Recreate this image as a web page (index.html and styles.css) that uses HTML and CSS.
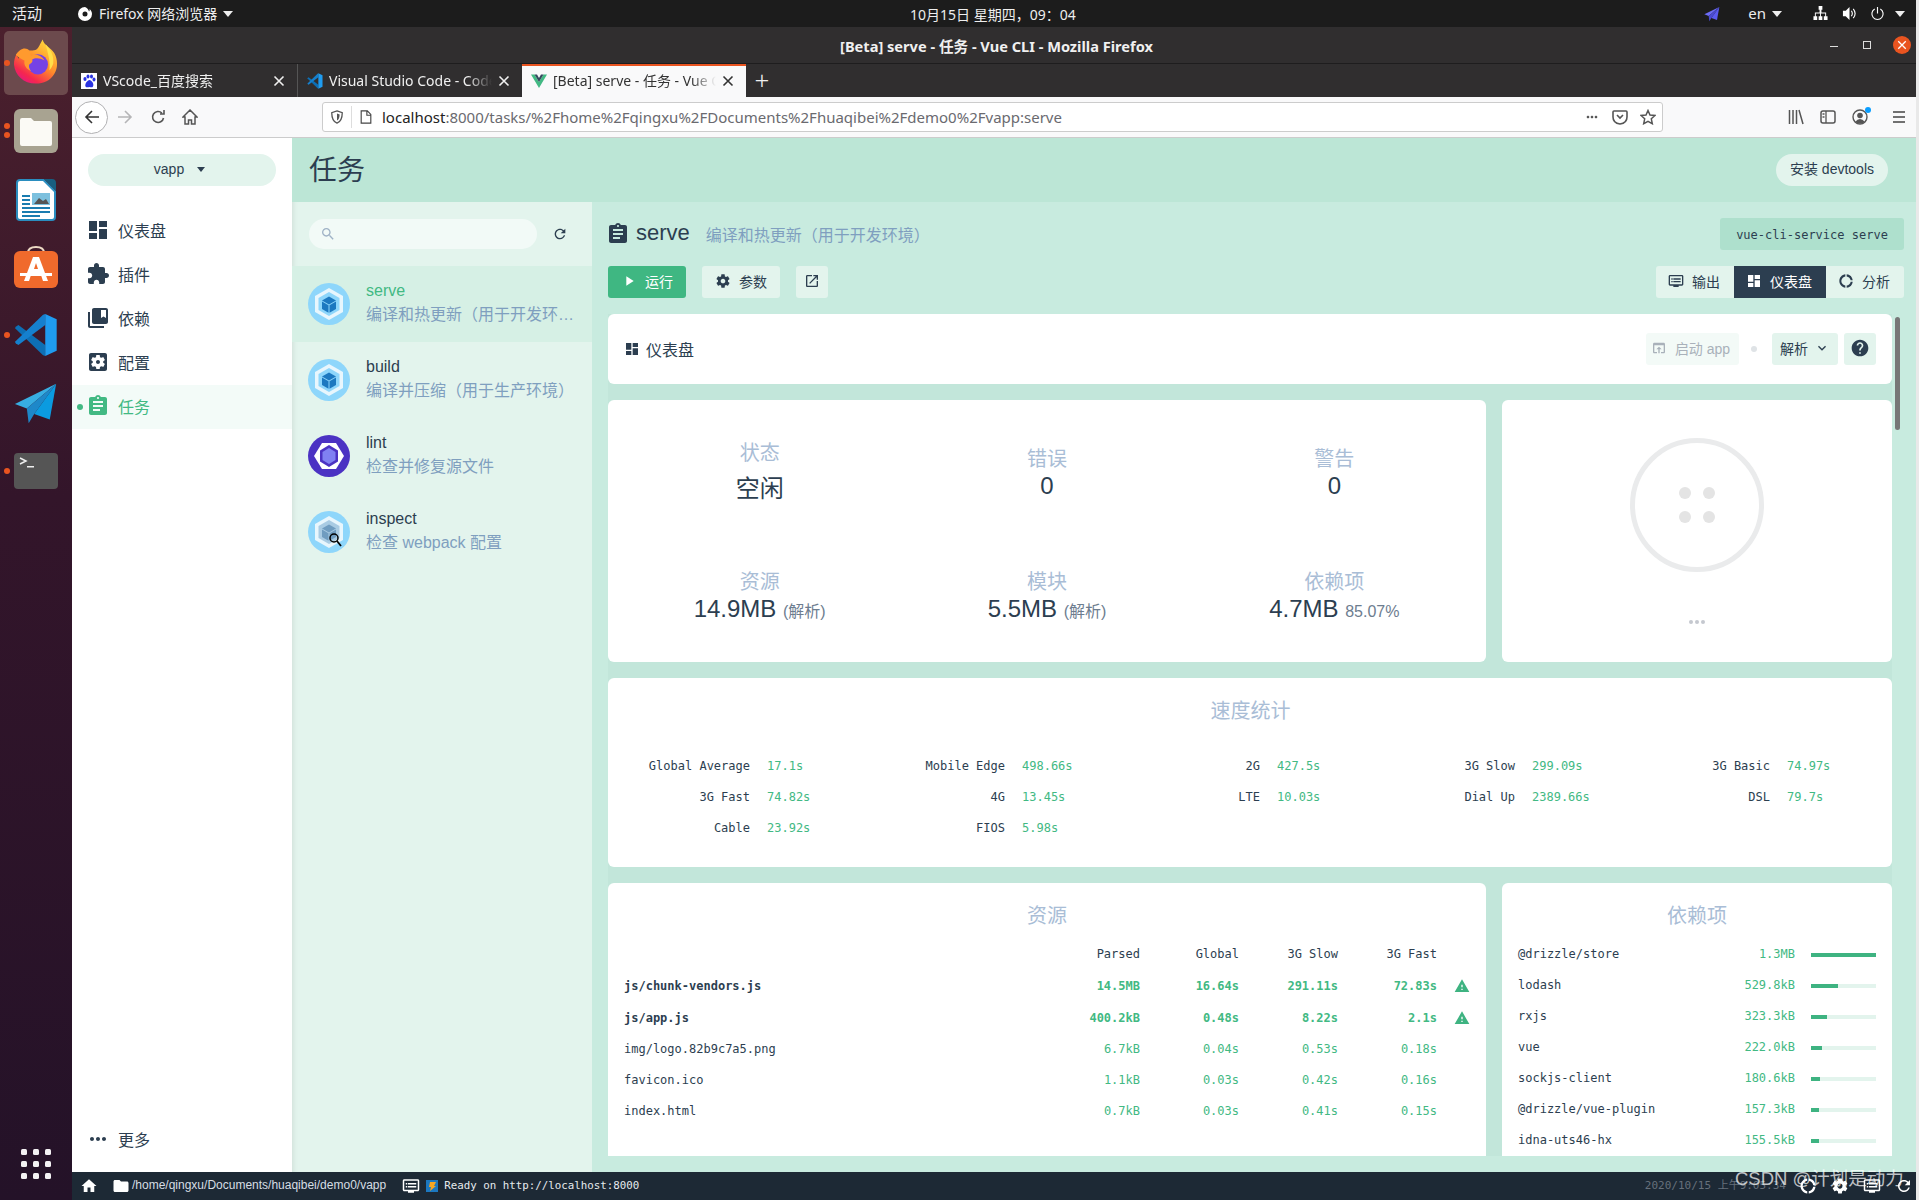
FILE: index.html
```html
<!DOCTYPE html>
<html lang="zh-CN">
<head>
<meta charset="utf-8">
<title>[Beta] serve - 任务 - Vue CLI</title>
<link rel="stylesheet" href="styles.css">
</head>
<body>
<svg class="defs" width="0" height="0" aria-hidden="true">
  <symbol id="dash" viewBox="0 0 24 24"><path d="M3 13h8V3H3v10zm0 8h8v-6H3v6zm10 0h8V11h-8v10zm0-18v6h8V3h-8z"/></symbol>
  <symbol id="ext" viewBox="0 0 24 24"><path d="M20.5 11H19V7c0-1.1-.9-2-2-2h-4V3.5C13 2.12 11.88 1 10.5 1S8 2.12 8 3.5V5H4c-1.1 0-1.99.9-1.99 2v3.8H3.5c1.49 0 2.7 1.21 2.7 2.7s-1.21 2.7-2.7 2.7H2V20c0 1.1.9 2 2 2h3.8v-1.5c0-1.49 1.21-2.7 2.7-2.7 1.49 0 2.7 1.21 2.7 2.7V22H17c1.1 0 2-.9 2-2v-4h1.5c1.38 0 2.5-1.12 2.5-2.5S21.88 11 20.5 11z"/></symbol>
  <symbol id="coll" viewBox="0 0 24 24"><path d="M4 6H2v14c0 1.1.9 2 2 2h14v-2H4V6zm16-4H8c-1.1 0-2 .9-2 2v12c0 1.1.9 2 2 2h12c1.1 0 2-.9 2-2V4c0-1.1-.9-2-2-2zm0 10l-2.5-1.5L15 12V4h5v8z"/></symbol>
  <symbol id="setapp" viewBox="0 0 24 24"><path d="M12 10c-1.1 0-2 .9-2 2s.9 2 2 2 2-.9 2-2-.9-2-2-2zm7-7H5c-1.11 0-2 .9-2 2v14c0 1.1.89 2 2 2h14c1.11 0 2-.9 2-2V5c0-1.1-.89-2-2-2zm-1.75 9c0 .23-.02.46-.05.68l1.48 1.16c.13.11.17.3.08.45l-1.4 2.42c-.09.15-.27.21-.43.15l-1.74-.7c-.36.28-.76.51-1.18.69l-.26 1.85c-.03.17-.18.3-.35.3h-2.8c-.17 0-.32-.13-.35-.29l-.26-1.85c-.43-.18-.82-.41-1.18-.69l-1.74.7c-.16.06-.34 0-.43-.15l-1.4-2.42c-.09-.15-.05-.34.08-.45l1.48-1.16c-.03-.23-.05-.46-.05-.69 0-.23.02-.46.05-.68l-1.48-1.16c-.13-.11-.17-.3-.08-.45l1.4-2.42c.09-.15.27-.21.43-.15l1.74.7c.36-.28.76-.51 1.18-.69l.26-1.85c.03-.17.18-.3.35-.3h2.8c.17 0 .32.13.35.29l.26 1.85c.43.18.82.41 1.18.69l1.74-.7c.16-.06.34 0 .43.15l1.4 2.42c.09.15.05.34-.08.45l-1.48 1.16c.03.23.05.46.05.69z"/></symbol>
  <symbol id="task" viewBox="0 0 24 24"><path d="M19 3h-4.18C14.4 1.84 13.3 1 12 1c-1.3 0-2.4.84-2.82 2H5c-1.1 0-2 .9-2 2v14c0 1.1.9 2 2 2h14c1.1 0 2-.9 2-2V5c0-1.1-.9-2-2-2zm-7 0c.55 0 1 .45 1 1s-.45 1-1 1-1-.45-1-1 .45-1 1-1zm2 14H7v-2h7v2zm3-4H7v-2h10v2zm0-4H7V7h10v2z"/></symbol>
  <symbol id="more" viewBox="0 0 24 24"><path d="M6 10c-1.1 0-2 .9-2 2s.9 2 2 2 2-.9 2-2-.9-2-2-2zm12 0c-1.1 0-2 .9-2 2s.9 2 2 2 2-.9 2-2-.9-2-2-2zm-6 0c-1.1 0-2 .9-2 2s.9 2 2 2 2-.9 2-2-.9-2-2-2z"/></symbol>
  <symbol id="search" viewBox="0 0 24 24"><path d="M15.5 14h-.79l-.28-.27C15.41 12.59 16 11.11 16 9.5 16 5.91 13.09 3 9.5 3S3 5.91 3 9.5 5.91 16 9.5 16c1.61 0 3.09-.59 4.23-1.57l.27.28v.79l5 4.99L20.49 19l-4.99-5zm-6 0C7.01 14 5 11.99 5 9.5S7.01 5 9.5 5 14 7.01 14 9.5 11.99 14 9.5 14z"/></symbol>
  <symbol id="refresh" viewBox="0 0 24 24"><path d="M17.65 6.35C16.2 4.9 14.21 4 12 4c-4.42 0-7.99 3.58-7.99 8s3.57 8 7.99 8c3.73 0 6.84-2.55 7.73-6h-2.08c-.82 2.33-3.04 4-5.65 4-3.31 0-6-2.69-6-6s2.69-6 6-6c1.66 0 3.14.69 4.22 1.78L13 11h7V4l-2.35 2.35z"/></symbol>
  <symbol id="play" viewBox="0 0 24 24"><path d="M8 5v14l11-7z"/></symbol>
  <symbol id="gear" viewBox="0 0 24 24"><path d="M19.43 12.98c.04-.32.07-.64.07-.98s-.03-.66-.07-.98l2.11-1.65c.19-.15.24-.42.12-.64l-2-3.46c-.12-.22-.39-.3-.61-.22l-2.49 1c-.52-.4-1.08-.73-1.69-.98l-.38-2.65C14.46 2.18 14.25 2 14 2h-4c-.25 0-.46.18-.49.42l-.38 2.65c-.61.25-1.17.59-1.69.98l-2.49-1c-.23-.09-.49 0-.61.22l-2 3.46c-.13.22-.07.49.12.64l2.11 1.65c-.04.32-.07.65-.07.98s.03.66.07.98l-2.11 1.65c-.19.15-.24.42-.12.64l2 3.46c.12.22.39.3.61.22l2.49-1c.52.4 1.08.73 1.69.98l.38 2.65c.03.24.24.42.49.42h4c.25 0 .46-.18.49-.42l.38-2.65c.61-.25 1.17-.59 1.69-.98l2.49 1c.23.09.49 0 .61-.22l2-3.46c.12-.22.07-.49-.12-.64l-2.11-1.65zM12 15.5c-1.93 0-3.5-1.57-3.5-3.5s1.57-3.5 3.5-3.5 3.5 1.57 3.5 3.5-1.57 3.5-3.5 3.5z"/></symbol>
  <symbol id="open" viewBox="0 0 24 24"><path d="M19 19H5V5h7V3H5c-1.11 0-2 .9-2 2v14c0 1.1.89 2 2 2h14c1.1 0 2-.9 2-2v-7h-2v7zM14 3v2h3.59l-9.83 9.83 1.41 1.41L19 6.41V10h2V3h-7z"/></symbol>
  <symbol id="donut" viewBox="0 0 24 24"><path d="M11 5.08V2c-5 .5-9 4.81-9 10s4 9.5 9 10v-3.08c-3-.48-6-3.4-6-6.92s3-6.44 6-6.92zM18.97 11H22c-.47-5-4-8.53-9-9v3.08C16 5.51 18.54 8 18.97 11zM13 18.92V22c5-.47 8.53-4 9-9h-3.03c-.43 3-2.97 5.49-5.97 5.92z"/></symbol>
  <symbol id="dvr" viewBox="0 0 24 24"><path d="M21 3H3c-1.1 0-2 .9-2 2v12c0 1.1.9 2 2 2h5v2h8v-2h5c1.1 0 1.99-.9 1.99-2L23 5c0-1.1-.9-2-2-2zm0 14H3V5h18v12zm-2-9H8v2h11V8zm0 4H8v2h11v-2zM7 8H5v2h2V8zm0 4H5v2h2v-2z"/></symbol>
  <symbol id="browser" viewBox="0 0 24 24"><path d="M19 4H5c-1.11 0-2 .9-2 2v12c0 1.1.89 2 2 2h4v-2H5V8h14v10h-4v2h4c1.1 0 2-.9 2-2V6c0-1.1-.89-2-2-2zm-7 6l-4 4h3v6h2v-6h3l-4-4z"/></symbol>
  <symbol id="expand" viewBox="0 0 24 24"><path d="M16.59 8.59L12 13.17 7.41 8.59 6 10l6 6 6-6z"/></symbol>
  <symbol id="help" viewBox="0 0 24 24"><path d="M12 2C6.48 2 2 6.48 2 12s4.48 10 10 10 10-4.48 10-10S17.52 2 12 2zm1 17h-2v-2h2v2zm2.07-7.75l-.9.92C13.45 12.9 13 13.5 13 15h-2v-.5c0-1.1.45-2.1 1.17-2.83l1.24-1.26c.37-.36.59-.86.59-1.41 0-1.1-.9-2-2-2s-2 .9-2 2H8c0-2.21 1.79-4 4-4s4 1.79 4 4c0 .88-.36 1.68-.93 2.25z"/></symbol>
  <symbol id="warn" viewBox="0 0 24 24"><path d="M1 21h22L12 2 1 21zm12-3h-2v-2h2v2zm0-4h-2v-4h2v4z"/></symbol>
  <symbol id="home" viewBox="0 0 24 24"><path d="M10 20v-6h4v6h5v-8h3L12 3 2 12h3v8z"/></symbol>
  <symbol id="folder" viewBox="0 0 24 24"><path d="M10 4H4c-1.1 0-1.99.9-1.99 2L2 18c0 1.1.9 2 2 2h16c1.1 0 2-.9 2-2V8c0-1.1-.9-2-2-2h-8l-2-2z"/></symbol>
  <symbol id="caret" viewBox="0 0 10 6"><path d="M0 0h10L5 6z"/></symbol>
  <symbol id="close" viewBox="0 0 12 12"><path d="M1.5 1.5l9 9m0-9l-9 9" fill="none" stroke="currentColor" stroke-width="1.6"/></symbol>
  <symbol id="plane" viewBox="0 0 48 48"><path d="M46 3L1 25l13 5z" fill="#37aee2"/><path d="M46 3L14 30l2 16 6-10z" fill="#1e88c9"/><path d="M46 3L22 36l17 6z" fill="#0b9be0"/></symbol>
  <symbol id="vscode" viewBox="0 0 100 100"><path d="M3 35q-1-2 1-4l6-4 61 46v25l-5-2z" fill="#0d6fb5"/><path d="M3 65q-1 2 1 4l6 4 61-46V2l-5 2z" fill="#1580ce"/><path d="M71 2l26 12v72L71 98z" fill="#1f9cf0"/></symbol>
  <symbol id="webpack" viewBox="0 0 42 42"><circle cx="21" cy="21" r="21" fill="#8ed6fb"/><path d="M21 5l14 8v16l-14 8-14-8V13z" fill="#e8f6fd"/><path d="M21 9l10.500 6v12L21 33l-10.500-6V15z" fill="#8ed6fb"/><path d="M21 13.500l7 4-7 4-7-4z" fill="#1c78c0"/><path d="M14 18.500l6.500 3.700v7.600L14 26z" fill="#1c78c0"/><path d="M28 18.500l-6.500 3.700v7.600L28 26z" fill="#1c78c0"/></symbol>
</svg>

<div class="desk">
  <header class="topbar">
    <span class="tb-act">活动</span>
    <span class="tb-app">
      <svg class="tb-ff" viewBox="0 0 16 16"><path d="M8 1a7 7 0 1 0 7 7c0-2-1-4-2.500-5 .3 1 .2 2-.5 2.500C11.500 3.500 10 1.500 8 1zm0 4.500A2.500 2.500 0 1 1 8 10.500 2.500 2.500 0 0 1 8 5.500z" fill="#fff"/></svg>
      Firefox 网络浏览器
      <svg class="caret"><use href="#caret"/></svg>
    </span>
    <span class="tb-clock">10月15日 星期四，09：04</span>
    <span class="tb-tray">
      <svg class="tray-plane" viewBox="0 0 48 48"><path d="M46 3L1 25l13 5z" fill="#6b6bf5"/><path d="M46 3L14 30l2 16 6-10z" fill="#4a4ad0"/><path d="M46 3L22 36l17 6z" fill="#5a5aee"/></svg>
      <span class="tray-en">en <svg class="caret"><use href="#caret"/></svg></span>
      <svg class="tray-ic" viewBox="0 0 16 16"><path d="M6 0h4v4H9v3h5v4h1.500v4h-4v-4H13V8H8.500v3H10v4H6v-4h1.500V8H3v3h1.500v4h-4v-4H2V7h5V4H6z" fill="#fff"/></svg>
      <svg class="tray-ic tray-vol" viewBox="0 0 16 16"><path d="M1 5h3l4-4v14l-4-4H1z" fill="#fff"/><path d="M10 5q2 3 0 6M12 3q4 5 0 10" stroke="#fff" fill="none" stroke-width="1.200"/></svg>
      <svg class="tray-ic tray-pow" viewBox="0 0 16 16"><path d="M5 3.200a6 6 0 1 0 6 0M8 1v7" stroke="#fff" fill="none" stroke-width="1.200"/></svg>
      <svg class="caret"><use href="#caret"/></svg>
    </span>
  </header>

  <div class="below">
    <nav class="dock">
      <div class="slot slot-on"><i class="pip"></i>
        <svg class="dk dk-ff" viewBox="0 0 48 48">
          <defs>
            <linearGradient id="ffa" x1="0.800" y1="0.100" x2="0.200" y2="1"><stop offset="0" stop-color="#ffd43a"/><stop offset="0.450" stop-color="#ff8a2b"/><stop offset="0.800" stop-color="#f5274e"/><stop offset="1" stop-color="#e31587"/></linearGradient>
          </defs>
          <path d="M31 1c1 6 8 8 12 14 4 7 4 16 0 22-4 7-11 10-19 10C11 47 2 38 1 27c0-4 1-8 3-11 0 2 1 4 2 5 1-4 4-7 8-8 4-1 9 1 12-3 2-3 3-6 5-9z" fill="url(#ffa)"/>
          <path d="M34 6c5 5 9 12 8 20-1 3-2 5-4 7 1-8-1-16-4-27z" fill="#ffdf4a"/>
          <circle cx="26" cy="27" r="10.500" fill="#7542e5"/>
          <path d="M3 17c3-5 8-8 12-6 2 1 2 3 5 3-2 1-2 2-1 4 4-2 10-1 14 5-5-3-10-3-13-1 1 3-1 4-3 5-1 2 0 5 2 7-5-2-8-6-7-11-3-1-6-3-9-6z" fill="#ff9a2e"/>
        </svg>
      </div>
      <div class="slot"><i class="pip pip-a"></i><i class="pip pip-b"></i>
        <svg class="dk" viewBox="0 0 44 44"><rect width="44" height="44" rx="6" fill="#a8a391"/><path d="M6 11q0-2 2-2h9l3 3h16q2 0 2 2v21q0 2-2 2H8q-2 0-2-2z" fill="#fbfaf5"/></svg>
      </div>
      <div class="slot">
        <svg class="dk" viewBox="0 0 44 44"><path d="M2 6q0-4 4-4h24l12 12v26q0 4-4 4H6q-4 0-4-4z" fill="#2a8dbf"/><path d="M4 6q0-2 2-2h23l11 11v25q0 2-2 2H6q-2 0-2-2z" fill="#fff"/><path d="M30 2h8q4 0 4 4v8z" fill="#185e80"/><path d="M8 18h8v2H8zm0 4h8v2H8zm0 4h8v2H8zm-0 4h28v2H8zm0 4h28v2H8zm0 4h18v2H8z" fill="#1a7cb0"/><rect x="18" y="16" width="18" height="12" fill="#7cc0de"/><path d="M20 27l5-6 4 3 3-2 3 5z" fill="#555"/></svg>
      </div>
      <div class="slot">
        <svg class="dk" viewBox="0 0 44 44"><path d="M14 8q0-6 8-6t8 6" fill="none" stroke="#ecd9c4" stroke-width="2"/><rect y="6" width="44" height="37" rx="6" fill="#f06a2c"/><path d="M19 12h6l9 24h-5l-2-6H17l-2 6h-5z" fill="#fff"/><path d="M6 28h32v3H6z" fill="#fff"/><path d="M20 24h4l-2-6z" fill="#f06a2c"/></svg>
      </div>
      <div class="slot"><i class="pip"></i>
        <svg class="dk"><use href="#vscode"/></svg>
      </div>
      <div class="slot">
        <svg class="dk dk-pl"><use href="#plane"/></svg>
      </div>
      <div class="slot"><i class="pip"></i>
        <svg class="dk" viewBox="0 0 44 44"><rect y="4" width="44" height="36" rx="4" fill="#555"/><path d="M6 9l6 3-6 3" fill="none" stroke="#eee" stroke-width="1.500"/><path d="M13 17h7v1.500h-7z" fill="#eee"/></svg>
      </div>
      <div class="apps">
        <i></i><i></i><i></i><i></i><i></i><i></i><i></i><i></i><i></i>
      </div>
    </nav>

    <div class="win">
      <div class="titlebar">
        <span class="title">[Beta] serve - 任务 - Vue CLI - Mozilla Firefox</span>
        <span class="winbtns">
          <i class="wb-min"></i><i class="wb-max"></i>
          <span class="wb-close"><svg class="wb-x"><use href="#close"/></svg></span>
        </span>
      </div>

      <div class="tabs">
        <div class="tab">
          <svg class="fav" viewBox="0 0 16 16"><rect width="16" height="16" fill="#fff"/><g fill="#2932e1"><ellipse cx="4" cy="6" rx="1.600" ry="2"/><ellipse cx="7" cy="3.500" rx="1.500" ry="2"/><ellipse cx="10.500" cy="3.500" rx="1.500" ry="2"/><ellipse cx="13" cy="6.500" rx="1.500" ry="2"/><path d="M8.500 7c2 0 5 4 3.500 6.500-1 1.500-2.500.5-3.500.5s-3 1-4-.5C3.500 11 6.500 7 8.500 7z"/></g></svg>
          <span class="tab-t">VScode_百度搜索</span>
          <svg class="tab-x"><use href="#close"/></svg>
        </div>
        <div class="tab tab-sep">
          <svg class="fav"><use href="#vscode"/></svg>
          <span class="tab-t">Visual Studio Code - Code Editing</span>
          <svg class="tab-x"><use href="#close"/></svg>
        </div>
        <div class="tab tab-on">
          <svg class="fav" viewBox="0 0 16 16"><path d="M0 1.500h3.500L8 9l4.500-7.500H16L8 15z" fill="#42b983"/><path d="M3.500 1.500H6L8 5l2-3.500h2.500L8 9z" fill="#35495e"/></svg>
          <span class="tab-t">[Beta] serve - 任务 - Vue CLI</span>
          <svg class="tab-x"><use href="#close"/></svg>
        </div>
        <span class="tab-new">+</span>
      </div>

      <div class="toolbar">
        <span class="back"><svg class="tool-in" viewBox="0 0 16 16"><path d="M15 8H2M8 2L2 8l6 6" fill="none" stroke="#333" stroke-width="1.600"/></svg></span>
        <svg class="tool fwd" viewBox="0 0 16 16"><path d="M1 8h13M8 2l6 6-6 6" fill="none" stroke="#b5b5b7" stroke-width="1.600"/></svg>
        <svg class="tool" viewBox="0 0 16 16"><path d="M13.500 9a5.500 5.500 0 1 1-1.600-5M14 1v4h-4" fill="none" stroke="#555" stroke-width="1.600"/></svg>
        <svg class="tool" viewBox="0 0 16 16"><path d="M8 1L1 8h2v7h3.500v-4h3v4H13V8h2z" fill="none" stroke="#555" stroke-width="1.500"/></svg>
        <div class="url">
          <svg class="url-sh" viewBox="0 0 16 16"><path d="M8 1l6 2c0 6-1 10-6 12C3 13 2 9 2 3z" fill="none" stroke="#555" stroke-width="1.500"/><path d="M8 4l3 1c0 3-1 6-3 7z" fill="#555"/></svg>
          <i class="url-sep"></i>
          <svg class="url-pg" viewBox="0 0 16 16"><path d="M2.500 1h7l4 4v10h-11zM9 1v5h4.500" fill="none" stroke="#444" stroke-width="1.300"/></svg>
          <span class="url-t"><b>localhost</b>:8000/tasks/%2Fhome%2Fqingxu%2FDocuments%2Fhuaqibei%2Fdemo0%2Fvapp:serve</span>
          <svg class="url-ic url-more"><use href="#more"/></svg>
          <svg class="url-ic" viewBox="0 0 16 16"><path d="M2 2h12q1 0 1 1v5q0 6-7 7-7-1-7-7V3q0-1 1-1zM5 6l3 3 3-3" fill="none" stroke="#555" stroke-width="1.600"/></svg>
          <svg class="url-ic url-last" viewBox="0 0 16 16"><path d="M8 1.500l2 4.500 5 .5-3.700 3.300 1 4.900L8 12.300 3.700 14.700l1-4.900L1 6.500 6 6z" fill="none" stroke="#555" stroke-width="1.500"/></svg>
        </div>
        <svg class="tool tool-lib" viewBox="0 0 16 16"><path d="M1.500 1v14M5 1v14M8.500 1v14M11 1l4 14" fill="none" stroke="#555" stroke-width="1.500"/></svg>
        <svg class="tool" viewBox="0 0 16 16"><rect x="1" y="2" width="14" height="12" rx="2" fill="none" stroke="#555" stroke-width="1.500"/><path d="M6 2v12M2.500 5h2M2.500 8h2" stroke="#555" stroke-width="1.300"/></svg>
        <span class="acct"><svg class="tool-in" viewBox="0 0 16 16"><circle cx="8" cy="8" r="7" fill="none" stroke="#555" stroke-width="1.400"/><circle cx="8" cy="6.500" r="2.800" fill="#555"/><path d="M3 13q5-6 10 0-5 3-10 0z" fill="#555"/></svg><i class="acct-dot"></i></span>
        <i class="tool-sep"></i>
        <svg class="tool" viewBox="0 0 16 16"><path d="M2 3h12M2 8h12M2 13h12" stroke="#444" stroke-width="1.700"/></svg>
      </div>

      <div class="app">
        <aside class="nav">
          <div class="proj">vapp <svg class="proj-c"><use href="#caret"/></svg></div>
          <ul class="menu">
            <li class="mi"><svg class="ic24"><use href="#dash"/></svg>仪表盘</li>
            <li class="mi"><svg class="ic24"><use href="#ext"/></svg>插件</li>
            <li class="mi"><svg class="ic24"><use href="#coll"/></svg>依赖</li>
            <li class="mi"><svg class="ic24"><use href="#setapp"/></svg>配置</li>
            <li class="mi mi-on"><i class="mi-dot"></i><svg class="ic24"><use href="#task"/></svg>任务</li>
          </ul>
          <div class="mi nav-more"><svg class="ic24"><use href="#more"/></svg>更多</div>
        </aside>

        <div class="work">
          <div class="head">
            <h1>任务</h1>
            <span class="devtools">安装 devtools</span>
          </div>
          <div class="body">
            <section class="tasks">
              <div class="t-search">
                <div class="t-input"><svg class="ic16 c-soft"><use href="#search"/></svg></div>
                <svg class="ic16"><use href="#refresh"/></svg>
              </div>
              <div class="t-item t-on">
                <svg class="t-ic"><use href="#webpack"/></svg>
                <div class="t-txt"><div class="t-n">serve</div><div class="t-d">编译和热更新（用于开发环境）</div></div>
              </div>
              <div class="t-item">
                <svg class="t-ic"><use href="#webpack"/></svg>
                <div class="t-txt"><div class="t-n">build</div><div class="t-d">编译并压缩（用于生产环境）</div></div>
              </div>
              <div class="t-item">
                <svg class="t-ic" viewBox="0 0 42 42"><circle cx="21" cy="21" r="21" fill="#4b32c3"/><path d="M14 8h14l8 13-8 13H14L6 21z" fill="#fff"/><path d="M21 10l9 5.500v11L21 32l-9-5.500v-11z" fill="#4b32c3"/><path d="M21 13l6.500 4v8L21 29l-6.500-4v-8z" fill="#8080f2"/></svg>
                <div class="t-txt"><div class="t-n">lint</div><div class="t-d">检查并修复源文件</div></div>
              </div>
              <div class="t-item">
                <svg class="t-ic" viewBox="0 0 42 42"><circle cx="21" cy="21" r="21" fill="#8ed6fb"/><path d="M21 5l14 8v16l-14 8-14-8V13z" fill="#e8f6fd"/><path d="M21 9l10.500 6v12L21 33l-10.500-6V15z" fill="#a9cbe3"/><path d="M21 13.500l7 4-7 4-7-4z" fill="#6f9cc0"/><path d="M14 18.500l6.500 3.700v7.600L14 26z" fill="#6f9cc0"/><path d="M28 18.500l-6.500 3.700v7.600L28 26z" fill="#6f9cc0"/><circle cx="26" cy="27" r="4" fill="none" stroke="#000" stroke-width="1.500"/><path d="M29 30l4 5" stroke="#000" stroke-width="1.800"/></svg>
                <div class="t-txt"><div class="t-n">inspect</div><div class="t-d">检查 webpack 配置</div></div>
              </div>
            </section>

            <section class="detail">
              <div class="d-top">
                <div class="d-title">
                  <svg class="ic24"><use href="#task"/></svg>
                  <span class="d-name">serve</span>
                  <span class="d-desc">编译和热更新（用于开发环境）</span>
                  <code class="d-cmd">vue-cli-service serve</code>
                </div>
                <div class="d-acts">
                  <span class="btn btn-run"><svg class="ic16"><use href="#play"/></svg>运行</span>
                  <span class="btn btn-soft"><svg class="ic16"><use href="#gear"/></svg>参数</span>
                  <span class="btn btn-soft btn-sq"><svg class="ic16"><use href="#open"/></svg></span>
                  <div class="seg">
                    <span class="seg-i"><svg class="ic16"><use href="#dvr"/></svg>输出</span>
                    <span class="seg-i seg-on"><svg class="ic16"><use href="#dash"/></svg>仪表盘</span>
                    <span class="seg-i"><svg class="ic16"><use href="#donut"/></svg>分析</span>
                  </div>
                </div>
              </div>

              <div class="panel">
                <div class="card dash-bar">
                  <svg class="ic16"><use href="#dash"/></svg>
                  <span class="dash-t">仪表盘</span>
                  <span class="btn btn-off"><svg class="ic16"><use href="#browser"/></svg>启动 app</span>
                  <i class="dash-dot"></i>
                  <span class="btn btn-soft btn-sel">解析<svg class="ic16"><use href="#expand"/></svg></span>
                  <span class="btn btn-soft btn-sq"><svg class="ic20"><use href="#help"/></svg></span>
                </div>

                <div class="row-a">
                  <div class="card stats">
                    <div class="stat"><div class="s-l">状态</div><div class="s-v s-cjk">空闲</div></div>
                    <div class="stat"><div class="s-l">错误</div><div class="s-v">0</div></div>
                    <div class="stat"><div class="s-l">警告</div><div class="s-v">0</div></div>
                    <div class="stat"><div class="s-l">资源</div><div class="s-v">14.9MB <small>(解析)</small></div></div>
                    <div class="stat"><div class="s-l">模块</div><div class="s-v">5.5MB <small>(解析)</small></div></div>
                    <div class="stat"><div class="s-l">依赖项</div><div class="s-v">4.7MB <small>85.07%</small></div></div>
                  </div>
                  <div class="card logo">
                    <svg class="logo-c" viewBox="0 0 134 134"><circle cx="67" cy="67" r="64.500" fill="none" stroke="#eaebec" stroke-width="5"/><g fill="#e4e4e4"><circle cx="55" cy="55" r="6"/><circle cx="79" cy="55" r="6"/><circle cx="55" cy="79" r="6"/><circle cx="79" cy="79" r="6"/></g></svg>
                    <svg class="logo-m" viewBox="0 0 16 4"><g fill="#c5c8cf"><circle cx="2" cy="2" r="2"/><circle cx="8" cy="2" r="2"/><circle cx="14" cy="2" r="2"/></g></svg>
                  </div>
                </div>

                <div class="card speed">
                  <h2 class="c-title">速度统计</h2>
                  <div class="sp-grid">
                    <div class="sp"><span class="sp-l">Global Average</span><span class="val">17.1s</span></div>
                    <div class="sp"><span class="sp-l">Mobile Edge</span><span class="val">498.66s</span></div>
                    <div class="sp"><span class="sp-l">2G</span><span class="val">427.5s</span></div>
                    <div class="sp"><span class="sp-l">3G Slow</span><span class="val">299.09s</span></div>
                    <div class="sp"><span class="sp-l">3G Basic</span><span class="val">74.97s</span></div>
                    <div class="sp"><span class="sp-l">3G Fast</span><span class="val">74.82s</span></div>
                    <div class="sp"><span class="sp-l">4G</span><span class="val">13.45s</span></div>
                    <div class="sp"><span class="sp-l">LTE</span><span class="val">10.03s</span></div>
                    <div class="sp"><span class="sp-l">Dial Up</span><span class="val">2389.66s</span></div>
                    <div class="sp"><span class="sp-l">DSL</span><span class="val">79.7s</span></div>
                    <div class="sp"><span class="sp-l">Cable</span><span class="val">23.92s</span></div>
                    <div class="sp"><span class="sp-l">FIOS</span><span class="val">5.98s</span></div>
                  </div>
                </div>

                <div class="row-a">
                  <div class="card assets">
                    <h2 class="c-title">资源</h2>
                    <div class="as as-h"><span></span><span>Parsed</span><span>Global</span><span>3G Slow</span><span>3G Fast</span><span></span></div>
                    <div class="as as-big"><span>js/chunk-vendors.js</span><span class="val">14.5MB</span><span class="val">16.64s</span><span class="val">291.11s</span><span class="val">72.83s</span><svg class="ic16 c-green"><use href="#warn"/></svg></div>
                    <div class="as as-big"><span>js/app.js</span><span class="val">400.2kB</span><span class="val">0.48s</span><span class="val">8.22s</span><span class="val">2.1s</span><svg class="ic16 c-green"><use href="#warn"/></svg></div>
                    <div class="as"><span>img/logo.82b9c7a5.png</span><span class="val">6.7kB</span><span class="val">0.04s</span><span class="val">0.53s</span><span class="val">0.18s</span><span></span></div>
                    <div class="as"><span>favicon.ico</span><span class="val">1.1kB</span><span class="val">0.03s</span><span class="val">0.42s</span><span class="val">0.16s</span><span></span></div>
                    <div class="as"><span>index.html</span><span class="val">0.7kB</span><span class="val">0.03s</span><span class="val">0.41s</span><span class="val">0.15s</span><span></span></div>
                  </div>
                  <div class="card deps">
                    <h2 class="c-title">依赖项</h2>
                    <div class="dep"><span class="dep-n">@drizzle/store</span><span class="val">1.3MB</span><span class="bar"><i style="width:100%"></i></span></div>
                    <div class="dep"><span class="dep-n">lodash</span><span class="val">529.8kB</span><span class="bar"><i style="width:42%"></i></span></div>
                    <div class="dep"><span class="dep-n">rxjs</span><span class="val">323.3kB</span><span class="bar"><i style="width:25%"></i></span></div>
                    <div class="dep"><span class="dep-n">vue</span><span class="val">222.0kB</span><span class="bar"><i style="width:17%"></i></span></div>
                    <div class="dep"><span class="dep-n">sockjs-client</span><span class="val">180.6kB</span><span class="bar"><i style="width:14%"></i></span></div>
                    <div class="dep"><span class="dep-n">@drizzle/vue-plugin</span><span class="val">157.3kB</span><span class="bar"><i style="width:12%"></i></span></div>
                    <div class="dep"><span class="dep-n">idna-uts46-hx</span><span class="val">155.5kB</span><span class="bar"><i style="width:12%"></i></span></div>
                  </div>
                </div>
              </div>
              <i class="scroll"></i>
            </section>
          </div>
        </div>
      </div>

      <footer class="status">
        <svg class="ic18"><use href="#home"/></svg>
        <svg class="ic18 st-folder"><use href="#folder"/></svg>
        <span class="st-path">/home/qingxu/Documents/huaqibei/demo0/vapp</span>
        <svg class="ic18 st-out"><use href="#dvr"/></svg>
        <svg class="st-wp" viewBox="0 0 12 12"><rect width="12" height="12" fill="#1c78c0"/><path d="M4 2h6L8 6h2l-6 5 1-4H3z" fill="#f5a623"/></svg>
        <span class="st-log">Ready on http://localhost:8000</span>
        <span class="st-time">2020/10/15 上午9:05:34</span>
        <span class="st-icons">
          <svg class="ic18"><use href="#donut"/></svg>
          <svg class="ic18"><use href="#gear"/></svg>
          <svg class="ic18"><use href="#dvr"/></svg>
          <svg class="ic18"><use href="#refresh"/></svg>
        </span>
      </footer>
    </div>
  </div>
  <span class="wm">CSDN @计划是动力</span>
</div>
</body>
</html>
```
FILE: styles.css
```css
* { box-sizing: border-box; }
html, body { margin: 0; padding: 0; height: 100%; overflow: hidden; }
body { font-family: "Liberation Sans", "Noto Sans CJK SC", sans-serif; color: #2c3e50; background: #e9e9e9; }
svg { fill: currentColor; flex: none; display: block; }
i { display: block; font-style: normal; }
h1, h2, ul { margin: 0; padding: 0; font-weight: 400; list-style: none; }
.defs { position: absolute; }

.desk { position: relative; width: 1916px; height: 1200px; display: flex; flex-direction: column; }

/* GNOME top bar */
.topbar { height: 27px; background: #1c1c1c; color: #eee; display: flex; align-items: center; font: 14px/29px "Noto Sans", "Noto Sans CJK SC", sans-serif; position: relative; flex: none; }
.tb-act { margin-left: 12px; font-size: 15px; }
.tb-app { margin-left: 35px; display: flex; align-items: center; gap: 6px; }
.tb-ff { width: 16px; height: 16px; }
.caret { width: 10px; height: 6px; color: #eee; }
.tb-clock { position: absolute; left: 910px; top: 0; }
.tb-tray { margin-left: auto; padding-right: 11px; display: flex; align-items: center; }
.tray-plane { width: 16px; height: 16px; margin-right: 28px; }
.tray-en { display: flex; align-items: center; gap: 6px; margin-right: 31px; font-size: 15px; }
.tray-ic { width: 15px; height: 15px; margin-right: 14px; }
.tray-vol { margin-right: 13px; }
.tray-pow { margin-right: 10px; }

.below { flex: 1; display: flex; min-height: 0; }

/* Dock */
.dock { width: 72px; flex: none; background: linear-gradient(180deg, #4b202d 0%, #33152a 40%, #241228 100%); display: flex; flex-direction: column; padding-top: 2px; }
.slot { height: 68px; position: relative; display: flex; align-items: center; justify-content: center; flex: none; }
.slot-on::before { content: ""; position: absolute; left: 4px; top: 2px; width: 64px; height: 64px; border-radius: 5px; background: #6c4a4d; }
.dk { width: 44px; height: 44px; position: relative; }
.dk-ff { width: 46px; height: 47px; margin-bottom: 3px; }
.dk-pl { width: 46px; height: 44px; }
.pip { position: absolute; left: 4px; top: 31px; width: 6px; height: 6px; border-radius: 50%; background: #e95420; }
.pip-a { top: 26px; }
.pip-b { top: 35px; }
.apps { margin-top: auto; margin-bottom: 21px; margin-left: 21px; display: grid; grid-template-columns: repeat(3, 6px); gap: 6px; }
.apps i { width: 6px; height: 6px; border-radius: 1.500px; background: #f4f2f4; }

/* Window */
.win { flex: 1; min-width: 0; display: flex; flex-direction: column; }
.titlebar { height: 37px; flex: none; background: #302e2f; color: #f0f0f0; display: flex; align-items: center; justify-content: center; position: relative; border-bottom: 1px solid #1e1d1e; }
.title { font: 700 14.600px/36px "Noto Sans", "Noto Sans CJK SC", sans-serif; margin: 2px 0 0 5px; }
.winbtns { position: absolute; right: 5px; top: 0; height: 36px; display: flex; align-items: center; }
.wb-min { width: 8px; height: 1.500px; background: #ddd; margin-top: 3px; }
.wb-max { width: 8px; height: 8px; border: 1.500px solid #ddd; margin-left: 25px; }
.wb-close { width: 18px; height: 18px; border-radius: 50%; background: #e95420; margin-left: 22px; display: flex; align-items: center; justify-content: center; color: #fff; }
.wb-x { width: 10px; height: 10px; }

.tabs { height: 33px; flex: none; background: #302e2f; display: flex; align-items: stretch; color: #f0f0f0; font: 14px/33px "Noto Sans", "Noto Sans CJK SC", sans-serif; }
.tab { width: 225px; display: flex; align-items: center; padding: 0 12px 0 9px; gap: 6px; }
.tab-sep { border-left: 1px solid #555; }
.tab-on { background: #f9f9fa; color: #333; border-top: 2px solid #e95420; width: 224px; padding-bottom: 2px; }
.fav { width: 16px; height: 16px; }
.tab-t { flex: 1; min-width: 0; white-space: nowrap; overflow: hidden; -webkit-mask-image: linear-gradient(90deg, #000 85%, transparent 100%); mask-image: linear-gradient(90deg, #000 85%, transparent 100%); }
.tab-x { width: 12px; height: 12px; }
.tab-new { width: 32px; text-align: center; font-size: 26px; font-weight: 300; }

.toolbar { height: 41px; flex: none; background: #f9f9fa; border-bottom: 1px solid #ccc; display: flex; align-items: center; padding-left: 3px; color: #555; }
.back { width: 33px; height: 33px; border-radius: 50%; border: 1px solid #b1b1b3; background: #fff; display: flex; align-items: center; justify-content: center; margin-right: 9px; flex: none; }
.tool { width: 16px; height: 16px; margin-right: 16px; }
.tool-in { width: 16px; height: 16px; }
.fwd { margin-right: 17px; }
.url { width: 1341px; flex: none; height: 30px; margin-left: 108px; background: #fff; border: 1px solid #ccc; border-radius: 3px; display: flex; align-items: center; padding-left: 7px; font: 15px/28px "Noto Sans", sans-serif; color: #6a6a6f; }
.url-sh { width: 14px; height: 14px; }
.url-sep { width: 1px; height: 22px; background: #ddd; margin: 0 7px; }
.url-pg { width: 14px; height: 16px; margin-right: 9px; }
.url-t b { font-weight: 400; color: #222; }
.url-t { flex: 1; white-space: nowrap; }
.url-ic { width: 16px; height: 16px; margin-right: 12px; color: #555; }
.url-last { margin-right: 6px; }
.tool-lib { margin-left: 125px; }
.acct { position: relative; display: block; flex: none; }
.acct-dot { position: absolute; right: -3px; top: -2px; width: 6px; height: 6px; border-radius: 50%; background: #0a9eff; }
.tool-sep { width: 1px; height: 32px; background: #ddd; margin-right: 12px; margin-left: 11px; }

/* Application */
.app { flex: 1; min-height: 0; display: flex; }
.nav { width: 220px; flex: none; background: #fff; display: flex; flex-direction: column; padding-top: 16px; }
.proj { width: 188px; height: 32px; margin-left: 16px; padding: 0 5px 2px 0; border-radius: 16px; background: #e3f4ed; font-size: 14px; display: flex; align-items: center; justify-content: center; gap: 13px; }
.proj-c { width: 8px; height: 5px; }
.menu { margin-top: 23px; }
.mi { height: 44px; display: flex; align-items: center; padding: 0 0 2px 14px; gap: 8px; font-size: 16px; position: relative; }
.mi-on { background: #f3fbf8; color: #42b983; }
.mi-dot { position: absolute; left: 5px; top: 19px; width: 6px; height: 6px; border-radius: 50%; background: #42b983; }
.nav-more { margin-top: auto; margin-bottom: 10px; }
.ic24 { width: 24px; height: 24px; }
.ic20 { width: 20px; height: 20px; }
.ic18 { width: 18px; height: 18px; }
.ic16 { width: 16px; height: 16px; }
.c-soft { color: #9fb2c6; }
.c-green { color: #3eb381; }

.work { flex: 1; min-width: 0; display: flex; flex-direction: column; }
.head { height: 64px; flex: none; background: #bce6d6; display: flex; align-items: center; justify-content: space-between; padding: 0 28px 0 17px; }
.head h1 { font-size: 28px; line-height: 40px; padding-top: 2px; }
.devtools { height: 32px; width: 112px; border-radius: 16px; background: #e3f4ed; font-size: 14px; line-height: 30px; text-align: center; }

.body { flex: 1; min-height: 0; display: flex; }
.tasks { width: 300px; flex: none; background: #e3f4ed; box-shadow: inset 6px 0 6px -6px rgba(0,0,0,.12); }
.t-search { height: 64px; display: flex; align-items: center; padding: 0 16px 0 17px; gap: 15px; }
.t-input { width: 228px; height: 30px; border-radius: 15px; background: #f2faf7; display: flex; align-items: center; padding-left: 11px; }
.t-item { height: 76px; display: flex; align-items: center; padding: 0 12px 0 16px; gap: 16px; }
.t-on { background: #d6f0e5; }
.t-on .t-n { color: #42b983; }
.t-ic { width: 42px; height: 42px; }
.t-txt { min-width: 0; flex: 1; padding-bottom: 2px; }
.t-n { font-size: 16px; line-height: 24px; margin-top: -1px; }
.t-d { font-size: 16px; line-height: 24px; color: #7f9fbf; white-space: nowrap; overflow: hidden; text-overflow: ellipsis; }

.detail { flex: 1; min-width: 0; background: #c8ebdf; display: flex; flex-direction: column; position: relative; padding-bottom: 16px; }
.d-top { padding: 16px 12px 16px 16px; display: flex; flex-direction: column; gap: 16px; flex: none; }
.d-title { height: 32px; display: flex; align-items: center; }
.d-title .ic24 { margin-left: -2px; }
.d-name { font-size: 22px; margin-left: 6px; margin-bottom: 3px; }
.d-desc { font-size: 16px; color: #7f9fbf; margin-left: 16px; flex: 1; }
.d-cmd { height: 32px; width: 184px; background: #aee0cd; border-radius: 3px; font: 12px/34px "DejaVu Sans Mono", monospace; text-align: center; }
.d-acts { height: 32px; display: flex; gap: 16px; }
.btn { height: 32px; border-radius: 3px; display: flex; align-items: center; justify-content: center; gap: 8px; font-size: 14px; flex: none; padding-bottom: 2px; }
.btn-run { width: 78px; background: #3fb782; color: #fff; }
.btn-soft { width: 78px; background: #e3f4ed; }
.btn-sq { width: 32px; }
.seg { margin-left: auto; display: flex; background: #e3f4ed; border-radius: 3px; overflow: hidden; }
.seg-i { display: flex; align-items: center; gap: 8px; padding: 0 14px 2px 12px; font-size: 14px; }
.seg-on { background: #2c3e50; color: #fff; }

.panel { flex: 1; min-height: 0; overflow: hidden; margin: 0 24px 0 16px; display: flex; flex-direction: column; gap: 16px; background: #c2e6da; }
.card { background: #fff; border-radius: 6px; flex: none; }
.dash-bar { height: 70px; display: flex; align-items: center; padding: 0 16px 0 16px; }
.dash-t { font-size: 16px; margin-left: 6px; flex: 1; }
.btn-off { width: 93px; background: #f3faf7; color: #a9b1ba; padding-right: 4px; }
.dash-dot { width: 6px; height: 6px; border-radius: 50%; background: #dfe3e6; margin: 0 15px 0 12px; }
.btn-sel { width: 66px; gap: 6px; margin-right: 6px; }

.row-a { display: flex; gap: 16px; flex: none; }
.stats { width: 878px; height: 262px; padding: 19px 16px 13px; display: grid; grid-template-columns: repeat(3, 1fr); grid-template-rows: 1fr 1fr; gap: 18px 16px; }
.stat { text-align: center; display: flex; flex-direction: column; justify-content: center; }
.s-l { font-size: 20px; line-height: 28px; color: #a9bdd6; }
.s-v { font-size: 24px; line-height: 26px; white-space: nowrap; }
.s-cjk { line-height: 42px; margin: 1px 0 -5px; }
.s-v small { font-size: 16px; color: #6d7d8f; }
.logo { width: 390px; height: 262px; display: flex; flex-direction: column; align-items: center; padding-top: 38px; }
.logo-c { width: 134px; height: 134px; fill: none; }
.logo-m { width: 16px; height: 4px; margin-top: 48px; fill: none; }

.speed { height: 189px; padding: 15px 4px 0 5px; }
.c-title { font-size: 20px; line-height: 36px; color: #a9bdd6; text-align: center; }
.sp-grid { margin-top: 22px; display: grid; grid-template-columns: repeat(5, 255px); grid-auto-rows: 31px; font: 12px/31px "DejaVu Sans Mono", monospace; }
.sp { display: flex; }
.sp-l { width: 137px; text-align: right; margin-right: 17px; white-space: pre; }
.val { color: #42b983; }

.assets { width: 878px; height: 300px; padding: 15px 16px 0; }
.as { display: grid; grid-template-columns: 1fr repeat(4, 99px) 33px; font: 12px/31px "DejaVu Sans Mono", monospace; align-items: center; }
.as span:not(:first-child) { text-align: right; }
.as svg { justify-self: end; }
.as-h { margin-top: 5px; height: 31px; }
.as-big { font-weight: 700; line-height: 32px; }
.deps { width: 390px; height: 300px; padding: 15px 16px 0; }
.dep { display: flex; align-items: center; font: 12px/31px "DejaVu Sans Mono", monospace; }
.deps .c-title + .dep { margin-top: 5px; }
.dep-n { flex: 1; }
.bar { width: 65px; height: 4px; background: #e3f4ed; margin-left: 16px; }
.bar i { height: 4px; background: #3eb381; }
.scroll { position: absolute; right: 16px; top: 115px; width: 5px; height: 113px; border-radius: 3px; background: #777; }

/* Status bar */
.status { height: 28px; flex: none; background: #1d2935; color: #fff; display: flex; align-items: center; padding-left: 8px; position: relative; }
.st-folder { margin-left: 14px; }
.st-path { font-size: 12px; color: #d6dde4; margin-left: 2px; padding-bottom: 2px; }
.st-out { margin-left: 16px; }
.st-wp { width: 12px; height: 12px; margin-left: 6px; }
.st-log { font: 10.800px/32px "DejaVu Sans Mono", monospace; margin-left: 6px; color: #e5e9ee; }
.st-time { margin-left: auto; font: 11px/28px "DejaVu Sans Mono", "Noto Sans CJK SC", monospace; color: #66707b; margin-right: 13px; }
.st-icons { display: flex; gap: 14px; padding-right: 3px; }

.wm { position: absolute; left: 1735px; top: 1166px; font-size: 18.500px; line-height: 26px; color: rgba(255,255,255,.72); white-space: nowrap; }
```
